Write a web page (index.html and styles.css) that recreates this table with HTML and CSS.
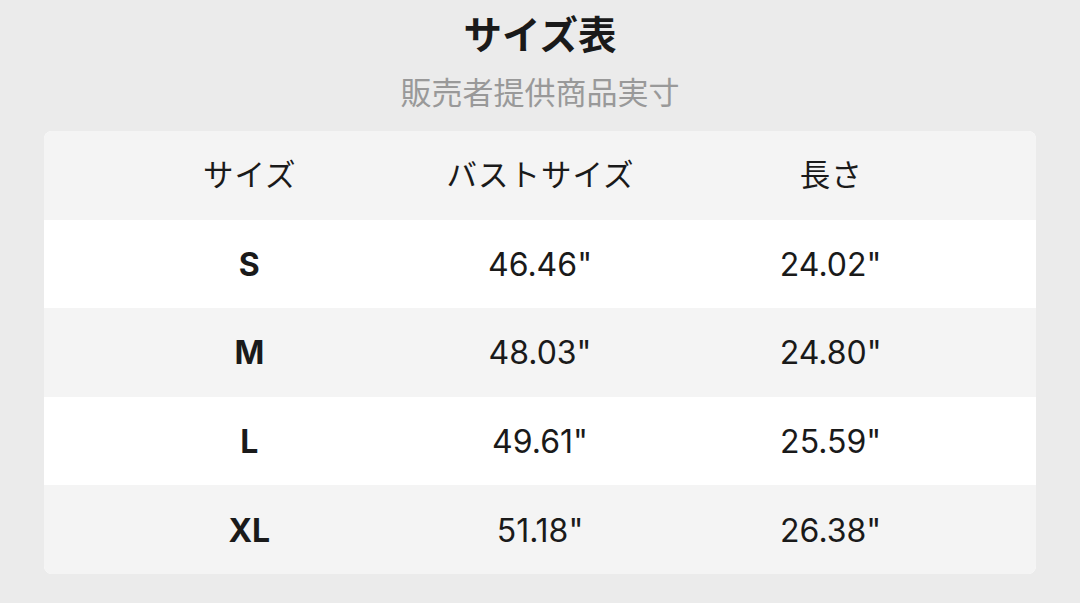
FILE: index.html
```html
<!DOCTYPE html>
<html lang="ja">
<head>
<meta charset="utf-8">
<link rel="stylesheet" href="styles.css">
</head>
<body>
<div class="page">
  <h1 class="title">サイズ表</h1>
  <p class="subtitle">販売者提供商品実寸</p>
  <div class="card">
    <div class="row head">
      <div class="cell">サイズ</div>
      <div class="cell">バストサイズ</div>
      <div class="cell">長さ</div>
    </div>
    <div class="row">
      <div class="cell size">S</div>
      <div class="cell num">46.46"</div>
      <div class="cell num">24.02"</div>
    </div>
    <div class="row alt">
      <div class="cell size">M</div>
      <div class="cell num">48.03"</div>
      <div class="cell num">24.80"</div>
    </div>
    <div class="row">
      <div class="cell size">L</div>
      <div class="cell num">49.61"</div>
      <div class="cell num">25.59"</div>
    </div>
    <div class="row alt">
      <div class="cell size">XL</div>
      <div class="cell num">51.18"</div>
      <div class="cell num">26.38"</div>
    </div>
  </div>
</div>
</body>
</html>
```
FILE: styles.css
```css
html, body {
  margin: 0;
  padding: 0;
  background: #ebebeb;
}
body {
  font-family: Inter, "Liberation Sans", "Noto Sans CJK JP", sans-serif;
  color: #1a1a1a;
}
.page {
  width: 1080px;
  height: 603px;
  display: flex;
  flex-direction: column;
  align-items: center;
}
.title {
  margin: 12px 0 0;
  font-size: 38.5px;
  line-height: 46px;
  font-weight: 700;
  color: #1a1a1a;
}
.subtitle {
  margin: 13px 0 0;
  font-size: 31px;
  line-height: 44px;
  color: #999999;
}
.card {
  margin-top: 16px;
  width: 992px;
  background: #ffffff;
  border-radius: 8px;
  overflow: hidden;
  display: flex;
  flex-direction: column;
}
.row {
  display: grid;
  grid-template-columns: 1fr 1fr 1fr;
  padding: 0 60px;
  height: 88.6px;
  align-items: center;
  background: #ffffff;
}
.row.head, .row.alt {
  background: #f4f4f4;
}
.cell {
  text-align: center;
  font-size: 32px;
  line-height: 40px;
  color: #1a1a1a;
  padding-top: 2px;
}
.head .cell {
  font-size: 30.5px;
  letter-spacing: 1px;
  padding-top: 0;
  padding-left: 1px;
}
.cell.size {
  font-weight: 700;
}
```
